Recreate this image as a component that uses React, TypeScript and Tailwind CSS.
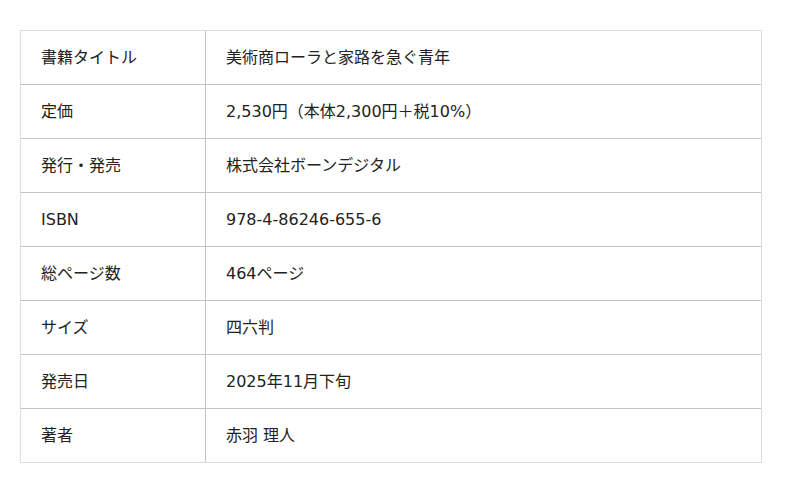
import React from "react";

const rows: [string, string][] = [
  ["書籍タイトル", "美術商ローラと家路を急ぐ青年"],
  ["定価", "2,530円（本体2,300円＋税10%）"],
  ["発行・発売", "株式会社ボーンデジタル"],
  ["ISBN", "978-4-86246-655-6"],
  ["総ページ数", "464ページ"],
  ["サイズ", "四六判"],
  ["発売日", "2025年11月下旬"],
  ["著者", "赤羽 理人"],
];

export default function App() {
  return (
    <div
      className="min-h-[493px] w-[800px] bg-white pt-[30px] pl-[20px] text-[16px] text-[#222]"
      style={{ fontFamily: '"DejaVu Sans", "Noto Sans CJK JP", sans-serif' }}
    >
      <div className="w-[742px] border border-[#dcdcdc]">
        {rows.map(([label, value], i) => (
          <div
            key={label}
            className={
              i < rows.length - 1
                ? "flex h-[54px] border-b border-[#c4c4c4]"
                : "flex h-[53px]"
            }
          >
            <div className="flex w-[185px] items-center border-r border-[#c4c4c4] pl-[20px]">
              {label}
            </div>
            <div className="flex flex-1 items-center pl-[20px]">{value}</div>
          </div>
        ))}
      </div>
    </div>
  );
}
